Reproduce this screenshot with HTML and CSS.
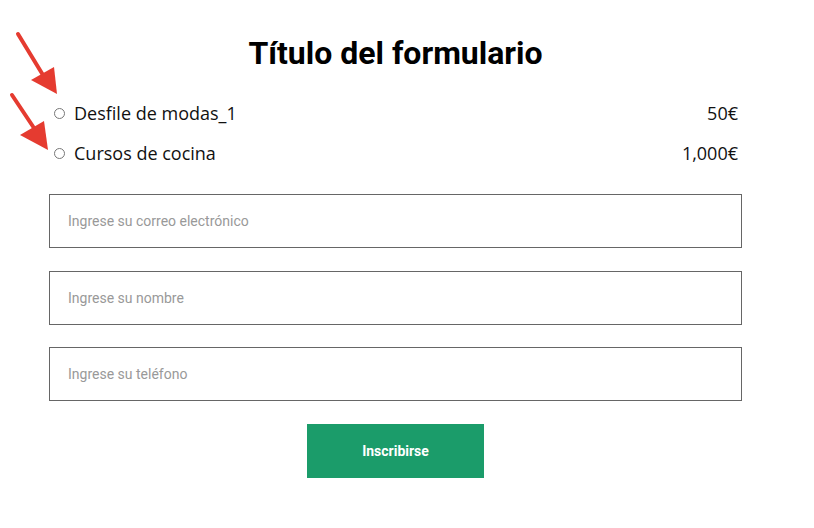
FILE: index.html
```html
<!DOCTYPE html>
<html lang="es">
<head>
  <meta charset="UTF-8" />
  <meta name="viewport" content="width=device-width, initial-scale=1.0" />
  <title>Título del formulario</title>
  <link rel="stylesheet" href="styles.css">
</head>
<body>
  <div class="form-wrap">
    <h1>Título del formulario</h1>

    <div class="options">
      <label class="option">
        <span class="radio"></span>
        <span class="name">Desfile de modas_1</span>
        <span class="price">50€</span>
      </label>
      <label class="option">
        <span class="radio"></span>
        <span class="name">Cursos de cocina</span>
        <span class="price">1,000€</span>
      </label>
    </div>

    <div class="fields">
      <input type="email" placeholder="Ingrese su correo electrónico">
      <input type="text" placeholder="Ingrese su nombre">
      <input type="tel" placeholder="Ingrese su teléfono">
    </div>

    <div class="actions">
      <button class="submit-btn">Inscribirse</button>
    </div>
  </div>

  <!-- annotation arrows -->
  <svg class="arrows" width="70" height="160" viewBox="0 0 70 160">
    <line x1="18" y1="34" x2="46" y2="80" stroke="#e53b30" stroke-width="4" stroke-linecap="round"/>
    <polygon points="31,80 54,67 57,94" fill="#e53b30"/>
    <line x1="12" y1="95" x2="38" y2="134" stroke="#e53b30" stroke-width="4" stroke-linecap="round"/>
    <polygon points="20,135 44,121 48,150" fill="#e53b30"/>
  </svg>
</body>
</html>
```

FILE: styles.css
```css
body {
  margin: 8px;
  background: #fff;
  font-family: 'Roboto', sans-serif;
  color: #000;
}

.form-wrap {
  width: 693px;
  margin-left: 41px;
}

h1 {
  margin: 26px 0 21px;
  font-size: 32px;
  line-height: 38px;
  font-weight: 700;
  text-align: center;
}

.options {
  padding: 0 4px 0 5px;
}

.option {
  display: flex;
  align-items: center;
  height: 40px;
  font-family: 'Open Sans', sans-serif;
  font-size: 18px;
  color: #111;
}

.radio {
  width: 9px;
  height: 9px;
  border: 1px solid #777;
  border-radius: 50%;
  margin-right: 9px;
}

.price {
  margin-left: auto;
}

.fields {
  display: flex;
  flex-direction: column;
  gap: 22.5px;
  margin-top: 21px;
}

.fields input {
  box-sizing: border-box;
  height: 54px;
  width: 100%;
  margin: 0;
  padding: 0 18px;
  border: 1px solid #666;
  border-radius: 0;
  font-family: 'Roboto', sans-serif;
  font-size: 14px;
  color: #333;
  outline: none;
}

.fields input::placeholder {
  color: #999;
}

.actions {
  display: flex;
  justify-content: center;
  margin-top: 23px;
}

.submit-btn {
  width: 177px;
  height: 54px;
  background-color: #1b9c6a;
  color: #fff;
  border: none;
  font-family: 'Roboto', sans-serif;
  font-size: 14px;
  font-weight: 700;
  cursor: pointer;
}

.arrows {
  position: absolute;
  left: 0;
  top: 0;
}
```
